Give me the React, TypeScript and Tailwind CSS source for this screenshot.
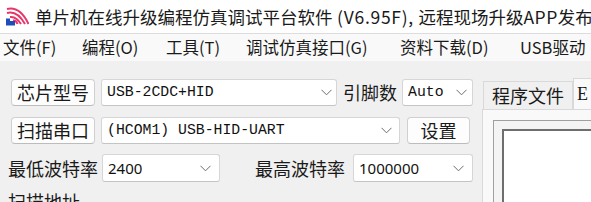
import React from "react";

const cjk = { fontFamily: '"Noto Sans CJK SC", "Noto Sans", sans-serif' };
const mono = { fontFamily: '"Liberation Mono", "Noto Sans CJK SC", monospace' };

function Chevron() {
  return (
    <svg width="11" height="7" viewBox="0 0 11 7" className="shrink-0">
      <polyline points="0.5,0.8 5.5,5.8 10.5,0.8" fill="none" stroke="#6b6b6b" strokeWidth="1" />
    </svg>
  );
}

function Logo() {
  return (
    <svg width="24" height="20" viewBox="0 0 24 20">
      <g fill="none" stroke="#e8366b" strokeWidth="2">
        <path d="M2 6 Q12 3 20 17" />
        <path d="M2 2 Q15 -1 23.5 17" />
        <path d="M5 10 Q11 9 16 17" />
        <path d="M8 13.5 Q11 13 12.5 17" />
      </g>
      <path d="M1 14 L10 14 L10 18.5 L1 18.5 Z" fill="#1c4fb8" />
      <path d="M1 11.5 L5 11.5 L5 14 L1 14 Z" fill="#1c4fb8" />
    </svg>
  );
}

function Btn({ w, children }: { w: string; children: React.ReactNode }) {
  return (
    <div
      className={`${w} h-[27px] shrink-0 flex items-center justify-center rounded-[4px] border border-[#d0d0d0] border-b-[#bcbcbc] bg-[#fdfdfd] text-[18px] text-[#1a1a1a]`}
      style={cjk}
    >
      {children}
    </div>
  );
}

function Combo({
  w,
  text,
  monoFont,
  h = "h-[27px]",
  chevronPad = "pr-[8px]",
}: {
  w: string;
  text: string;
  monoFont?: boolean;
  h?: string;
  chevronPad?: string;
}) {
  return (
    <div
      className={`${w} ${h} ${chevronPad} shrink-0 flex items-center rounded-[3px] border border-[#d6d6d6] border-b-[#c4c4c4] bg-white pl-[5px]`}
    >
      <span
        className={`flex-1 whitespace-nowrap overflow-hidden text-[#111] ${monoFont ? "text-[14.8px]" : "text-[15px]"}`}
        style={monoFont ? mono : { fontFamily: '"Noto Sans", "Noto Sans CJK SC", sans-serif' }}
      >
        {text}
      </span>
      <Chevron />
    </div>
  );
}

export default function App() {
  return (
    <div className="w-[591px] h-[202px] overflow-hidden bg-[#f0f0f0] flex flex-col" style={cjk}>
      {/* Title bar */}
      <div className="h-[34px] shrink-0 bg-white flex items-center border-b border-[#dcdcdc]">
        <div className="ml-[5px] w-[24px] flex items-center">
          <Logo />
        </div>
        <div className="ml-[6px] whitespace-nowrap text-[17.5px] text-[#1a1a1a] leading-none">
          单片机在线升级编程仿真调试平台软件<span className="tracking-[0.7px]"> (V6.95F), </span>远程现场升级<span className="tracking-[0.5px]">APP</span>发布
        </div>
      </div>
      {/* Menu bar */}
      <div className="h-[27px] shrink-0 bg-[#f9f9f9] flex items-center whitespace-nowrap text-[16.5px] text-[#1a1a1a] pl-[3px]">
        <span className="w-[79px]">文件(F)</span>
        <span className="w-[84px]">编程(O)</span>
        <span className="w-[80px]">工具(T)</span>
        <span className="w-[154px]">调试仿真接口(G)</span>
        <span className="w-[120px]">资料下载(D)</span>
        <span>USB驱动</span>
      </div>
      {/* Body */}
      <div className="flex-1 flex min-h-0">
        {/* Left */}
        <div className="w-[482px] shrink-0 flex flex-col pt-[18px]">
          <div className="flex items-center pl-[11px]">
            <Btn w="w-[84px]">芯片型号</Btn>
            <div className="ml-[6px]">
              <Combo w="w-[236px]" text="USB-2CDC+HID" monoFont chevronPad="pr-[4px]" />
            </div>
            <span className="ml-[6px] w-[54px] text-[18px] text-[#1a1a1a] whitespace-nowrap">引脚数</span>
            <div className="ml-[5px]">
              <Combo w="w-[71px]" text="Auto" monoFont chevronPad="pr-[5px]" />
            </div>
          </div>
          <div className="flex items-center pl-[11px] mt-[11px]">
            <Btn w="w-[84px]">扫描串口</Btn>
            <div className="ml-[6px]">
              <Combo w="w-[299px]" text="(HCOM1) USB-HID-UART" monoFont chevronPad="pr-[7px]" />
            </div>
            <div className="ml-[7px]">
              <Btn w="w-[63px]">设置</Btn>
            </div>
          </div>
          <div className="flex items-center pl-[8px] mt-[10px]">
            <span className="w-[94px] text-[18px] text-[#1a1a1a] whitespace-nowrap">最低波特率</span>
            <Combo w="w-[118px]" text="2400" h="h-[28px]" />
            <span className="ml-[35px] w-[98px] text-[18px] text-[#1a1a1a] whitespace-nowrap">最高波特率</span>
            <Combo w="w-[120px]" text="1000000" h="h-[28px]" />
          </div>
          <div className="pl-[8px] mt-[6px] text-[18px] text-[#1a1a1a] whitespace-nowrap leading-[26px]">
            扫描地址
          </div>
        </div>
        {/* Right: tabs */}
        <div className="flex-1 flex flex-col min-w-0">
          <div className="flex items-end h-[48px] shrink-0">
            <div className="ml-[1px] w-[90px] h-[28px] flex items-center justify-center border border-b-0 border-[#d9d9d9] bg-[#f0f0f0] text-[18px] text-[#1a1a1a] whitespace-nowrap">
              程序文件
            </div>
            <div className="flex-1 h-[31px] border-t border-l border-[#d9d9d9] bg-[#f9f9f9] pl-[3px] flex items-center text-[18px] text-[#1a1a1a] overflow-hidden whitespace-nowrap" style={{ fontFamily: '"Liberation Serif", serif' }}>
              E
            </div>
          </div>
          <div className="flex-1 border-l border-t border-[#d9d9d9] bg-[#f9f9f9] pt-[10px] pl-[10px]">
            <div className="h-full border border-r-0 border-b-0 border-[#a0a0a0] bg-[#f4f4f4] pt-[8px] pl-[8px]">
              <div className="h-full border-l-2 border-t-2 border-[#6e6e6e] bg-white"></div>
            </div>
          </div>
        </div>
      </div>
    </div>
  );
}
